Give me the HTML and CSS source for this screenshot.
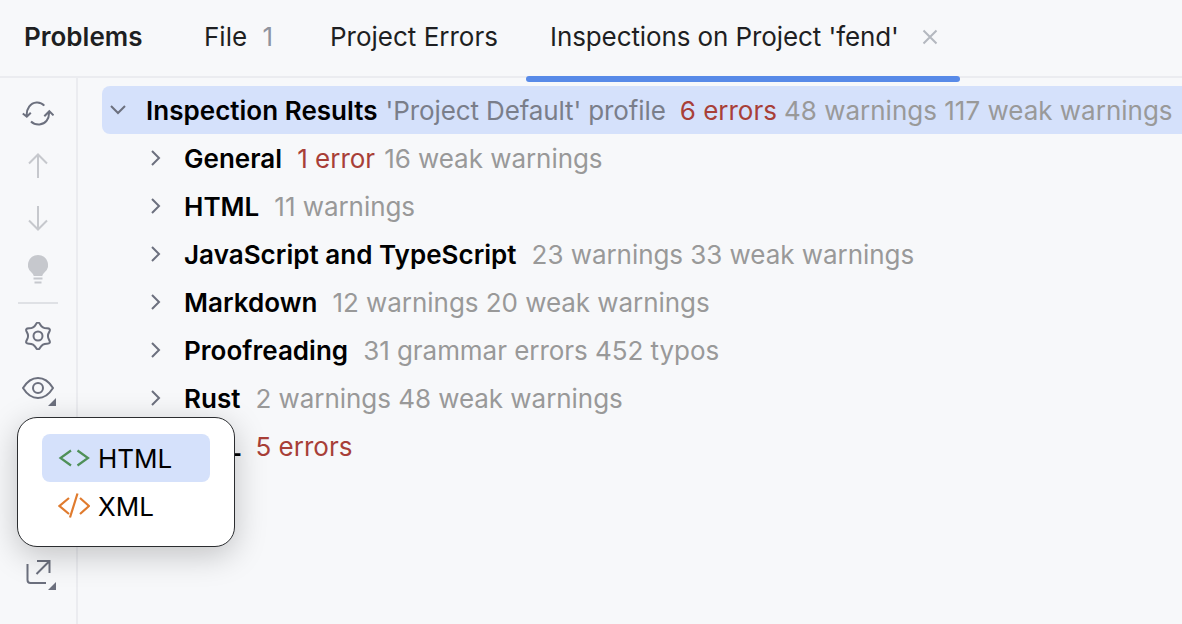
FILE: index.html
```html
<!DOCTYPE html>
<html lang="en">
<head>
<meta charset="utf-8">
<title>Problems</title>
<link rel="stylesheet" href="styles.css">
</head>
<body>
<div class="app">
  <header class="tabs">
    <div class="title">Problems</div>
    <div class="tab tab-file">File <span class="count">1</span></div>
    <div class="tab tab-errors">Project Errors</div>
    <div class="tab tab-active"><span class="tab-label">Inspections on Project 'fend'</span>
      <svg class="close" width="16" height="16" viewBox="0 0 16 16"><path d="M1.500 1.500l13 13M14.500 1.500l-13 13"/></svg>
    </div>
  </header>
  <div class="body">
    <aside class="side">
      <svg class="ic ic-first" width="32" height="28" viewBox="0 0 32 28"><path class="s" d="M.8 14.500l4 3.200 4-4M4.700 17C4.200 9.500 8.500 4 14.500 3.500c3-.2 5.700.8 7.800 3.200M22.300 17.200l5-5 4.200 4.200M27 13c.5 7-3.500 12-9.500 12.500-3 .2-6.200-.7-8.500-3"/></svg>
      <svg class="ic ic-up" width="20" height="26" viewBox="0 0 20 26"><path class="d" d="M10 25V2M1 10.500L10 1.500l9 9"/></svg>
      <svg class="ic ic-down" width="20" height="26" viewBox="0 0 20 26"><path class="d" d="M10 1v23M1 15.500l9 9 9-9"/></svg>
      <svg class="ic ic-bulb" width="20" height="30" viewBox="0 0 20 30"><path class="f" d="M10 0a10 10 0 0 1 6 18c-1 .8-1.500 2-1.700 3H5.700c-.2-1-.7-2.200-1.700-3A10 10 0 0 1 10 0z"/><path class="d" d="M5.500 23.500h9M6.500 27.500h7"/></svg>
      <div class="sep"></div>
      <svg class="ic ic-gear" width="28" height="28" viewBox="0 0 28 28"><path class="s" d="M11.800 2.440Q14 -1.500 16.200 2.440Q18.400 6.380 22.910 6.320Q27.420 6.250 25.110 10.130Q22.800 14 25.110 17.870Q27.420 21.750 22.910 21.690Q18.400 21.620 16.200 25.560Q14 29.500 11.800 25.560Q9.600 21.620 5.090 21.690Q.58 21.750 2.890 17.870Q5.200 14 2.890 10.130Q.58 6.250 5.090 6.320Q9.600 6.380 11.800 2.440z"/><circle class="s" cx="14" cy="14" r="4.500"/></svg>
      <div class="ic-wrap ic-eye">
        <svg width="32" height="22" viewBox="0 0 32 22"><path class="s" d="M1 11C5 4.500 10 1 16 1s11 3.500 15 10c-4 6.500-9 10-15 10S5 17.500 1 11z"/><circle class="s" cx="16" cy="11" r="5"/></svg>
        <span class="corner"></span>
      </div>
      <div class="ic-wrap ic-export">
        <svg width="28" height="26" viewBox="0 0 28 26"><path class="s" d="M3.500 5v16a3 3 0 0 0 3 3H22M13 2h12.500v12M25.500 2l-13 13"/></svg>
        <span class="corner"></span>
      </div>
    </aside>
    <main class="tree">
      <div class="row row-root">
        <svg class="chev" width="16" height="10" viewBox="0 0 16 10"><path d="M1 1l7 7 7-7"/></svg>
        <b>Inspection Results</b><span class="prof">'Project Default' profile</span><span class="err err-root">6 errors</span><span class="mut mut-root">48 warnings 117 weak warnings</span>
      </div>
      <div class="row"><svg class="chev-r" width="10" height="16" viewBox="0 0 10 16"><path d="M1 1l7 7-7 7"/></svg><b>General</b><span class="err">1 error</span><span class="mut">16 weak warnings</span></div>
      <div class="row"><svg class="chev-r" width="10" height="16" viewBox="0 0 10 16"><path d="M1 1l7 7-7 7"/></svg><b>HTML</b><span class="mut">11 warnings</span></div>
      <div class="row"><svg class="chev-r" width="10" height="16" viewBox="0 0 10 16"><path d="M1 1l7 7-7 7"/></svg><b>JavaScript and TypeScript</b><span class="mut">23 warnings 33 weak warnings</span></div>
      <div class="row"><svg class="chev-r" width="10" height="16" viewBox="0 0 10 16"><path d="M1 1l7 7-7 7"/></svg><b>Markdown</b><span class="mut">12 warnings 20 weak warnings</span></div>
      <div class="row"><svg class="chev-r" width="10" height="16" viewBox="0 0 10 16"><path d="M1 1l7 7-7 7"/></svg><b>Proofreading</b><span class="mut">31 grammar errors 452 typos</span></div>
      <div class="row"><svg class="chev-r" width="10" height="16" viewBox="0 0 10 16"><path d="M1 1l7 7-7 7"/></svg><b>Rust</b><span class="mut">2 warnings 48 weak warnings</span></div>
      <div class="row row-xml"><svg class="chev-r" width="10" height="16" viewBox="0 0 10 16"><path d="M1 1l7 7-7 7"/></svg><b>XML</b><span class="err">5 errors</span></div>
    </main>
  </div>
  <div class="popup">
    <div class="item item-sel">
      <svg width="32" height="20" viewBox="0 0 32 20"><path class="green" d="M13 2.500L2.500 10 13 17.500M19.500 2.500L30 10l-10.500 7.500"/></svg>HTML
    </div>
    <div class="item">
      <svg width="32" height="26" viewBox="0 0 32 26"><path class="orange" d="M11 5L1.500 13l9.500 8M22 5l9 8-9 8M19.500 .5L12 24.500"/></svg>XML
    </div>
  </div>
</div>
</body>
</html>
```

FILE: styles.css
```css
* { box-sizing: border-box; }
html, body { margin: 0; height: 100%; }
body {
  background: #f7f8fa;
  font-family: Inter, "Liberation Sans", sans-serif;
  font-size: 26px;
  color: #000;
  overflow: hidden;
}
.app { position: relative; width: 1182px; height: 624px; overflow: hidden; }

.tabs {
  display: flex;
  align-items: center;
  height: 78px;
  padding: 0 0 4px 24px;
  border-bottom: 2px solid #ebecf0;
  color: #1e1f22;
}
.title { font-weight: 600; width: 180px; }
.tab { white-space: nowrap; }
.tab-file { width: 126px; }
.tab-errors { width: 220px; }
.count { color: #8f939e; margin-left: 8px; }
.tab-active {
  position: relative;
  display: flex;
  align-items: center;
  gap: 23px;
}
.tab-label { letter-spacing: -0.1px; }
.tab-active::after {
  content: "";
  position: absolute;
  left: -24px;
  right: -22px;
  top: 55px;
  height: 6px;
  border-radius: 3px;
  background: #588ae8;
}
.close { position: relative; top: 1px; }
.close path { stroke: #b4b8bf; stroke-width: 2; fill: none; }

.body { display: flex; height: 546px; }
.side {
  width: 78px;
  flex: none;
  border-right: 2px solid #ebecf0;
  display: flex;
  flex-direction: column;
  align-items: center;
}
.side svg { display: block; }
.s { fill: none; stroke: #6c707e; stroke-width: 2; }
.d { fill: none; stroke: #c6c8cd; stroke-width: 2; }
.f { fill: #c6c8cd; }
.ic-first { margin-top: 21px; }
.ic-up { margin-top: 26px; }
.ic-down { margin-top: 26px; }
.ic-bulb { margin-top: 24px; }
.sep { width: 40px; height: 2px; background: #dfe1e5; margin-top: 17px; }
.ic-gear { margin-top: 18px; }
.ic-wrap { position: relative; }
.ic-eye { margin-top: 27px; }
.ic-export { margin-top: 160px; }
.corner {
  position: absolute;
  right: -2px;
  bottom: -7px;
  width: 0;
  height: 0;
  border-style: solid;
  border-width: 0 0 8px 8px;
  border-color: transparent transparent #6c707e transparent;
}
.ic-export .corner { right: -4px; bottom: -5px; }

.tree { flex: 1; min-width: 0; padding: 8px 0 0 24px; }
.row {
  display: flex;
  align-items: center;
  height: 48px;
  padding-left: 49px;
  white-space: nowrap;
}
.row b { font-weight: 600; margin-left: 23px; letter-spacing: 0.03px; }
.row span { margin-left: 15px; }
.row-root {
  background: #d5e1fb;
  border-radius: 8px 0 0 8px;
  padding-left: 8px;
  width: 1110px;
}
.row-root b { margin-left: 20px; }
.row .prof { color: #7a7e8a; margin-left: 8px; letter-spacing: -0.12px; }
.row .err-root { margin-left: 14px; }
.err { color: #a83f38; }
.row .err + .mut { margin-left: 9px; }
.row .err-root + .mut { margin-left: 7px; }
.row-xml .err { margin-left: 14px; }
.mut { color: #999; letter-spacing: -0.05px; }
.mut-root { letter-spacing: 0; }
.chev path, .chev-r path { fill: none; stroke: #6c707e; stroke-width: 2; }
.chev, .chev-r { flex: none; }

.popup {
  position: absolute;
  left: 17px;
  top: 417px;
  width: 218px;
  height: 130px;
  background: #fff;
  border: 1px solid #2b2d30;
  border-radius: 20px;
  padding: 16px 24px;
  box-shadow: 0 8px 32px rgba(0, 0, 0, 0.22);
}
.item {
  display: flex;
  align-items: center;
  gap: 8px;
  height: 48px;
  padding-left: 16px;
  border-radius: 8px;
}
.item-sel { background: #d5e1fb; }
.green { fill: none; stroke: #4f9058; stroke-width: 2.200; }
.orange { fill: none; stroke: #e07b2e; stroke-width: 2.200; }
```
